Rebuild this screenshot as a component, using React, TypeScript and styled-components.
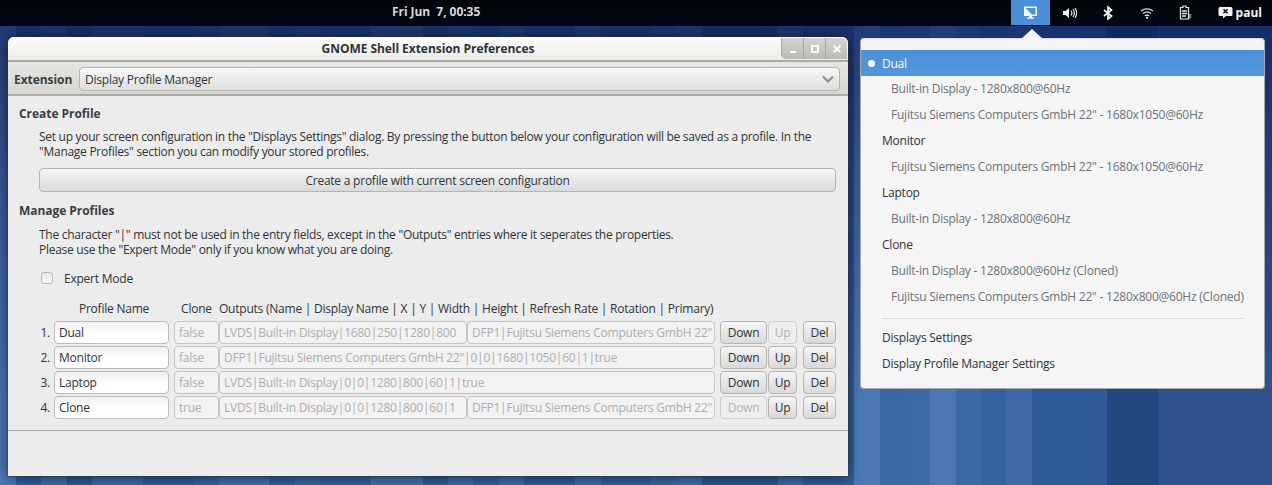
import React, { FC } from 'react';
import styled, { createGlobalStyle } from 'styled-components';

const FONT = `"Open Sans", "Noto Sans", "DejaVu Sans", sans-serif`;

// x where each wallpaper stripe ends, and its colour
const STRIPES: [number, string][] = [
  [16, '#4b78b5'], [41, '#2f5e9b'], [67, '#3f6ca8'], [92, '#2d5994'], [143, '#3d6aa6'],
  [194, '#2f5e9a'], [219, '#35649f'], [269, '#416ea9'], [295, '#30609b'], [320, '#3a69a4'],
  [371, '#33629d'], [423, '#4572ad'], [448, '#2e5c97'], [473, '#3c6ba6'], [499, '#33629d'],
  [524, '#3e6ca8'], [575, '#2f5d98'], [601, '#3f6da9'], [651, '#32619c'], [677, '#3a69a4'],
  [702, '#3f6ea9'], [778, '#2b5891'], [803, '#3d6aa6'], [854, '#305d98'], [880, '#4c79b6'],
  [905, '#396aa6'], [930, '#3c6ca7'], [956, '#4e77b5'], [981, '#3b6ba7'], [1006, '#33639f'],
  [1032, '#3f69a8'], [1083, '#2f5d9b'], [1107, '#2f5b98'], [1158, '#21487f'], [1272, '#2f528f'],
];

const stripeBackground = STRIPES.map(([end, colour], i) => {
  const start = i === 0 ? 0 : STRIPES[i - 1][0];
  return `${colour} ${start}px ${end}px`;
}).join(', ');

type Profile = {
  name: string;
  clone: string;
  outputs: string[];
  downDisabled?: boolean;
  upDisabled?: boolean;
};

const PROFILES: Profile[] = [
  {
    name: 'Dual',
    clone: 'false',
    outputs: ['LVDS|Built-in Display|1680|250|1280|800', 'DFP1|Fujitsu Siemens Computers GmbH 22"'],
    upDisabled: true,
  },
  { name: 'Monitor', clone: 'false', outputs: ['DFP1|Fujitsu Siemens Computers GmbH 22"|0|0|1680|1050|60|1|true'] },
  { name: 'Laptop', clone: 'false', outputs: ['LVDS|Built-in Display|0|0|1280|800|60|1|true'] },
  {
    name: 'Clone',
    clone: 'true',
    outputs: ['LVDS|Built-in Display|0|0|1280|800|60|1', 'DFP1|Fujitsu Siemens Computers GmbH 22"'],
    downDisabled: true,
  },
];

type MenuEntry = { label: string; kind: 'profile' | 'output' };

const MENU_ENTRIES: MenuEntry[] = [
  { label: 'Built-in Display - 1280x800@60Hz', kind: 'output' },
  { label: 'Fujitsu Siemens Computers GmbH 22" - 1680x1050@60Hz', kind: 'output' },
  { label: 'Monitor', kind: 'profile' },
  { label: 'Fujitsu Siemens Computers GmbH 22" - 1680x1050@60Hz', kind: 'output' },
  { label: 'Laptop', kind: 'profile' },
  { label: 'Built-in Display - 1280x800@60Hz', kind: 'output' },
  { label: 'Clone', kind: 'profile' },
  { label: 'Built-in Display - 1280x800@60Hz (Cloned)', kind: 'output' },
  { label: 'Fujitsu Siemens Computers GmbH 22" - 1280x800@60Hz (Cloned)', kind: 'output' },
];

const GlobalStyle = createGlobalStyle`
  html, body {
    margin: 0;
    padding: 0;
    background: #2f5e9b;
  }
  * {
    box-sizing: border-box;
  }
`;

const Desktop = styled.div`
  position: relative;
  width: 1272px;
  height: 485px;
  overflow: hidden;
  font-family: ${FONT};
  font-size: 12px;
  letter-spacing: -0.23px;
  color: #2e3436;
  background:
    linear-gradient(180deg, rgba(8, 22, 80, 0.62) 26px, rgba(8, 22, 80, 0.35) 160px, rgba(8, 22, 80, 0) 400px),
    linear-gradient(90deg, ${stripeBackground});
`;

const TopBar = styled.div`
  display: flex;
  align-items: flex-start;
  height: 26px;
  padding-left: 392px;
  background: linear-gradient(180deg, #020408, #030815);
`;

const Clock = styled.div`
  font-weight: 700;
  line-height: 23px;
  letter-spacing: -0.05px;
  color: #d8d8d8;
  white-space: pre;
`;

const StatusArea = styled.div`
  display: flex;
  margin-left: auto;
  padding-right: 10px;
`;

const StatusButton = styled.div<{ $active?: boolean }>`
  display: flex;
  align-items: center;
  justify-content: center;
  width: 39px;
  height: 25px;
  background: ${({ $active }) => ($active ? '#4a90d9' : 'transparent')};
`;

const UserButton = styled.div`
  display: flex;
  align-items: center;
  gap: 3px;
  height: 25px;
  margin-left: 12px;
  font-weight: 700;
  letter-spacing: 0;
  color: #f4f4f4;
`;

const Window = styled.div`
  position: absolute;
  left: 8px;
  top: 37px;
  display: flex;
  flex-direction: column;
  width: 840px;
  height: 439px;
  border-radius: 6px 6px 0 0;
  background: #ececec;
  box-shadow: 0 1px 14px rgba(0, 0, 0, 0.6), 0 0 0 1px rgba(70, 70, 70, 0.35);
`;

const TitleBar = styled.div`
  position: relative;
  display: flex;
  align-items: center;
  justify-content: center;
  flex: none;
  height: 25px;
  border-radius: 6px 6px 0 0;
  border-bottom: 2px solid #a9a9a5;
  font-weight: 700;
  letter-spacing: -0.05px;
  color: #2e3436;
  background: linear-gradient(180deg, #fdfdfd, #ececea);
`;

const WindowControls = styled.div`
  position: absolute;
  right: 1px;
  top: 1px;
  display: flex;
  height: 21px;
  border-bottom-left-radius: 5px;
  border-top-right-radius: 5px;
  overflow: hidden;
  background: linear-gradient(180deg, #d4d4d2, #b9b9b7);
`;

const ControlButton = styled.div`
  display: flex;
  align-items: center;
  justify-content: center;
  width: 22px;
  border-left: 1px solid #a9a9a7;
`;

const Toolbar = styled.div`
  display: flex;
  align-items: center;
  flex: none;
  gap: 6px;
  height: 34px;
  padding: 2px 8px 0 6px;
  border-bottom: 2px solid #a9a9a5;
  background: linear-gradient(180deg, #e6e6e3, #d6d6d3);
`;

const ToolbarLabel = styled.span`
  width: 59px;
  font-weight: 700;
  letter-spacing: -0.05px;
  color: #3a4042;
`;

const Combo = styled.div`
  display: flex;
  align-items: center;
  justify-content: space-between;
  flex: 1;
  height: 24px;
  padding: 0 5px;
  border: 1px solid #b5b5b2;
  border-radius: 4px;
  background: linear-gradient(180deg, #f7f7f7, #dedede);
`;

const Panel = styled.div`
  flex: none;
  height: 335px;
  padding: 10px 11px 0;
  border-bottom: 1px solid #a9a9a9;
  background: #ececec;
`;

const SectionTitle = styled.div`
  font-weight: 700;
  line-height: 16px;
  letter-spacing: -0.05px;
  color: #3a4042;
`;

const Description = styled.p`
  margin: 8px 0 0 20px;
  line-height: 15px;
  letter-spacing: -0.28px;
  white-space: nowrap;
`;

const CreateDescription = styled(Description)`
  margin-top: 7px;
`;

const WideButton = styled.div`
  display: flex;
  align-items: center;
  justify-content: center;
  width: 797px;
  height: 24px;
  margin: 9px 0 11px 20px;
  border: 1px solid #b5b5b2;
  border-radius: 4px;
  background: linear-gradient(180deg, #f7f7f7, #d9d9d9);
`;

const ExpertRow = styled.div`
  display: flex;
  align-items: center;
  gap: 11px;
  height: 14px;
  margin: 14px 0 0 22px;
`;

const Checkbox = styled.span`
  width: 12px;
  height: 12px;
  border: 1px solid #b9b9b9;
  border-radius: 3px;
  background: linear-gradient(180deg, #e6e6e6, #fafafa);
`;

const HeaderRow = styled.div`
  display: flex;
  align-items: center;
  height: 16px;
  margin: 15px 0 5px;
  white-space: nowrap;
`;

const HeaderCell = styled.div<{ $width: number; $left?: boolean }>`
  flex: none;
  width: ${({ $width }) => $width}px;
  text-align: ${({ $left }) => ($left ? 'left' : 'center')};
`;

const ProfileRows = styled.div`
  display: flex;
  flex-direction: column;
  gap: 2px;
`;

const ProfileRow = styled.div`
  display: flex;
  height: 23px;
`;

const RowNumber = styled.div`
  flex: none;
  width: 35px;
  padding-right: 4px;
  line-height: 23px;
  text-align: right;
`;

const Field = styled.div<{ $disabled?: boolean }>`
  display: flex;
  align-items: center;
  min-width: 0;
  height: 23px;
  padding: 0 4px;
  border: 1px solid ${({ $disabled }) => ($disabled ? '#c4c4c4' : '#bbbbbb')};
  border-radius: 4px;
  white-space: nowrap;
  overflow: hidden;
  color: ${({ $disabled }) => ($disabled ? '#aeaeae' : '#2e3436')};
  background: ${({ $disabled }) => ($disabled ? '#f2f2f2' : 'linear-gradient(180deg, #f0f0f0, #ffffff 60%)')};
`;

const NameField = styled(Field)`
  flex: none;
  width: 115px;
  margin-right: 5px;
`;

const CloneField = styled(Field)`
  flex: none;
  width: 45px;
`;

const OutputsCell = styled.div`
  display: flex;
  flex: none;
  width: 496px;
  margin-right: 5px;
`;

const OutputField = styled(Field)`
  flex: 1;
`;

const RowButton = styled.div<{ $width: number; $disabled?: boolean; $gap?: number }>`
  display: flex;
  align-items: center;
  justify-content: center;
  flex: none;
  width: ${({ $width }) => $width}px;
  height: 23px;
  margin-right: ${({ $gap }) => $gap ?? 0}px;
  border: 1px solid ${({ $disabled }) => ($disabled ? '#cfcfcf' : '#b5b5b2')};
  border-radius: 4px;
  color: ${({ $disabled }) => ($disabled ? '#b4b4b4' : '#2e3436')};
  background: ${({ $disabled }) => ($disabled ? '#eeeeee' : 'linear-gradient(180deg, #f5f5f5, #d9d9d9)')};
`;

const Popup = styled.div`
  position: absolute;
  left: 860px;
  top: 38px;
  width: 405px;
  height: 351px;
  padding-top: 11px;
  border: 1px solid #a8a8a8;
  border-top-color: #d8d8d8;
  border-radius: 4px;
  background: #f5f5f5;
`;

const PopupArrow = styled.div`
  position: absolute;
  left: 160px;
  top: -10px;
  width: 0;
  height: 0;
  border-left: 11px solid transparent;
  border-right: 11px solid transparent;
  border-bottom: 10px solid #f5f5f5;
`;

const ActiveItem = styled.div`
  display: flex;
  align-items: center;
  height: 26px;
  padding-left: 7px;
  gap: 7px;
  color: #ffffff;
  background: linear-gradient(180deg, #4a90d9, #5595dc);
`;

const Bullet = styled.span`
  width: 7px;
  height: 7px;
  border-radius: 50%;
  background: #ffffff;
`;

const MenuItem = styled.div<{ $kind: 'profile' | 'output' | 'action' }>`
  height: 26px;
  padding-left: ${({ $kind }) => ($kind === 'output' ? 30 : 21)}px;
  line-height: 26px;
  white-space: nowrap;
  color: ${({ $kind }) => ($kind === 'output' ? '#6d7375' : '#2e3436')};
`;

const MenuSeparator = styled.div`
  height: 1px;
  margin: 8px 20px 6px 21px;
  background: #dcdcdc;
`;

const MonitorIcon: FC = () => (
  <svg width="15" height="15" viewBox="0 0 15 15">
    <path d="M1 1.5h13v9.5H1z" fill="#f4f8fc" />
    <path d="M2.5 3h10v6.5h-3.5z" fill="#4a90d9" />
    <path d="M6 11h3v1.4H6zM4 12.6h7v1.2H4z" fill="#f4f8fc" />
  </svg>
);

const SpeakerIcon: FC = () => (
  <svg width="15" height="14" viewBox="0 0 15 14" fill="none">
    <path d="M1 5h2.5L7 2v10L3.5 9H1z" fill="#f2f2f2" />
    <path d="M9 4.5c1 1.4 1 3.6 0 5M11 3c1.7 2.4 1.7 5.600 0 8M13 2c2 3 2 7 0 10" stroke="#e8e8e8" strokeWidth="1.2" />
  </svg>
);

const BluetoothIcon: FC = () => (
  <svg width="10" height="14" viewBox="0 0 10 14" fill="none">
    <path d="M1 4l7.500 6L5 13V1l3.500 3L1 10" stroke="#f2f2f2" strokeWidth="1.700" />
  </svg>
);

const WifiIcon: FC = () => (
  <svg width="14" height="12" viewBox="0 0 14 12" fill="none">
    <path d="M1 4c3.500-2.800 8.500-2.800 12 0" stroke="#d8d8d8" strokeWidth="1.300" />
    <path d="M3 6.500c2.400-1.900 5.600-1.900 8 0" stroke="#e6e6e6" strokeWidth="1.300" />
    <path d="M5 8.800c1.200-.9 2.800-.9 4 0" stroke="#f2f2f2" strokeWidth="1.300" />
    <circle cx="7" cy="10.800" r="1.100" fill="#f2f2f2" />
  </svg>
);

const BatteryIcon: FC = () => (
  <svg width="14" height="15" viewBox="0 0 14 15" fill="none">
    <path d="M4 1h3v1.500h2.500V14H1.500V2.500H4z" stroke="#e8e8e8" strokeWidth="1.200" />
    <path d="M3 6h5M3 8.500h5M3 11h4" stroke="#e8e8e8" strokeWidth="1.300" />
    <path d="M10 9h3l-2 2.500h2L10 14.500z" fill="#8a8a8a" />
  </svg>
);

const ChatIcon: FC = () => (
  <svg width="15" height="13" viewBox="0 0 15 13">
    <path d="M2 1h11a1.500 1.500 0 0 1 1.500 1.500v6A1.500 1.500 0 0 1 13 10H8l-3 2.500V10H2A1.500 1.500 0 0 1 .5 8.500v-6A1.500 1.500 0 0 1 2 1z" fill="#f4f4f4" />
    <path d="M5.500 3.300l4 4M9.500 3.300l-4 4" stroke="#111" strokeWidth="1.600" />
  </svg>
);

const ChevronIcon: FC = () => (
  <svg width="12" height="8" viewBox="0 0 12 8" fill="none">
    <path d="M1 1.500l5 5 5-5" stroke="#8c8c8c" strokeWidth="2" />
  </svg>
);

const MinimizeIcon: FC = () => (
  <svg width="8" height="8" viewBox="0 0 8 8">
    <path d="M1 6h6v2H1z" fill="#fafafa" />
  </svg>
);

const MaximizeIcon: FC = () => (
  <svg width="8" height="8" viewBox="0 0 8 8" fill="none">
    <path d="M1 1h6v6H1z" stroke="#fafafa" strokeWidth="2" />
  </svg>
);

const CloseIcon: FC = () => (
  <svg width="8" height="8" viewBox="0 0 8 8" fill="none">
    <path d="M.7.7l6.600 6.600M7.300.7L.7 7.300" stroke="#fafafa" strokeWidth="2" />
  </svg>
);

export default function App() {
  return (
    <Desktop>
      <GlobalStyle />
      <TopBar>
        <Clock>Fri Jun  7, 00:35</Clock>
        <StatusArea>
          <StatusButton $active><MonitorIcon /></StatusButton>
          <StatusButton><SpeakerIcon /></StatusButton>
          <StatusButton><BluetoothIcon /></StatusButton>
          <StatusButton><WifiIcon /></StatusButton>
          <StatusButton><BatteryIcon /></StatusButton>
          <UserButton><ChatIcon />paul</UserButton>
        </StatusArea>
      </TopBar>

      <Window>
        <TitleBar>
          GNOME Shell Extension Preferences
          <WindowControls>
            <ControlButton><MinimizeIcon /></ControlButton>
            <ControlButton><MaximizeIcon /></ControlButton>
            <ControlButton><CloseIcon /></ControlButton>
          </WindowControls>
        </TitleBar>
        <Toolbar>
          <ToolbarLabel>Extension</ToolbarLabel>
          <Combo>
            Display Profile Manager
            <ChevronIcon />
          </Combo>
        </Toolbar>
        <Panel>
          <SectionTitle>Create Profile</SectionTitle>
          <CreateDescription>
            Set up your screen configuration in the "Displays Settings" dialog. By pressing the button below your configuration will be saved as a profile. In the
            <br />
            "Manage Profiles" section you can modify your stored profiles.
          </CreateDescription>
          <WideButton>Create a profile with current screen configuration</WideButton>
          <SectionTitle>Manage Profiles</SectionTitle>
          <Description>
            The character "|" must not be used in the entry fields, except in the "Outputs" entries where it seperates the properties.
            <br />
            Please use the "Expert Mode" only if you know what you are doing.
          </Description>
          <ExpertRow>
            <Checkbox />
            Expert Mode
          </ExpertRow>
          <HeaderRow>
            <HeaderCell $width={35} />
            <HeaderCell $width={120}>Profile Name</HeaderCell>
            <HeaderCell $width={45}>Clone</HeaderCell>
            <HeaderCell $width={496} $left>Outputs (Name | Display Name | X | Y | Width | Height | Refresh Rate | Rotation | Primary)</HeaderCell>
          </HeaderRow>
          <ProfileRows>
            {PROFILES.map((profile, index) => (
              <ProfileRow key={profile.name}>
                <RowNumber>{index + 1}.</RowNumber>
                <NameField>{profile.name}</NameField>
                <CloneField $disabled>{profile.clone}</CloneField>
                <OutputsCell>
                  {profile.outputs.map((output) => (
                    <OutputField key={output} $disabled>{output}</OutputField>
                  ))}
                </OutputsCell>
                <RowButton $width={47} $gap={1} $disabled={profile.downDisabled}>Down</RowButton>
                <RowButton $width={29} $gap={6} $disabled={profile.upDisabled}>Up</RowButton>
                <RowButton $width={33}>Del</RowButton>
              </ProfileRow>
            ))}
          </ProfileRows>
        </Panel>
      </Window>

      <Popup>
        <PopupArrow />
        <ActiveItem>
          <Bullet />
          Dual
        </ActiveItem>
        {MENU_ENTRIES.map((entry, index) => (
          <MenuItem key={index} $kind={entry.kind}>{entry.label}</MenuItem>
        ))}
        <MenuSeparator />
        <MenuItem $kind="action">Displays Settings</MenuItem>
        <MenuItem $kind="action">Display Profile Manager Settings</MenuItem>
      </Popup>
    </Desktop>
  );
}
